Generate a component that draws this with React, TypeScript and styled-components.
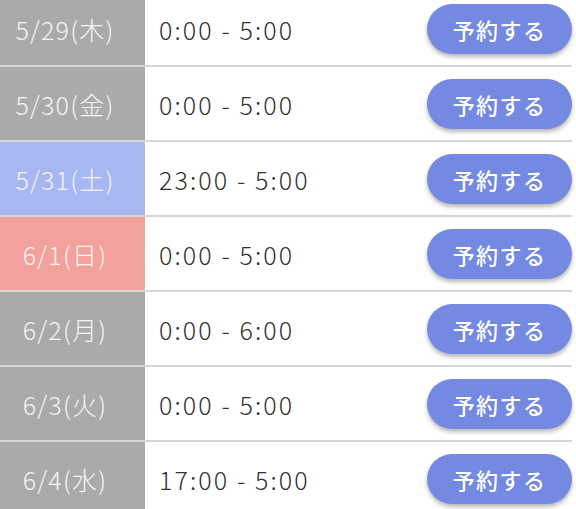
import React from "react";
import styled, { createGlobalStyle } from "styled-components";

const Global = createGlobalStyle`
  html, body { margin: 0; padding: 0; background: #ffffff; overflow: hidden; }
  body { font-family: "Noto Sans CJK JP", "Noto Sans", sans-serif; }
`;

const List = styled.div`
  width: 572px;
  margin-top: -8px;
  display: flex;
  flex-direction: column;
`;

const Row = styled.div`
  display: grid;
  grid-template-columns: 145px 1fr;
  column-gap: 1px;
  height: 73px;
  border-bottom: 2px solid #d6d6d6;
`;

type Kind = "weekday" | "sat" | "sun";

const bg: Record<Kind, string> = {
  weekday: "#aaaaaa",
  sat: "#a7b7f1",
  sun: "#f3a19c",
};

const DateCell = styled.div<{ $kind: Kind }>`
  background: ${(p) => bg[p.$kind]};
  color: #f4f4f4;
  font-size: 25px;
  font-weight: 300;
  display: flex;
  align-items: center;
  justify-content: center;
  letter-spacing: 1.2px;
  padding: 1px 15px 0 0;
`;

const Body = styled.div`
  display: flex;
  align-items: center;
  justify-content: space-between;
  padding-left: 13px;
  background: #ffffff;
`;

const Time = styled.span`
  font-size: 25px;
  font-weight: 300;
  color: #333333;
  letter-spacing: 2.1px;
  padding-top: 1px;
`;

const Button = styled.button`
  width: 145px;
  height: 50px;
  border: none;
  border-radius: 25px;
  background: #7489e1;
  color: #ffffff;
  font-family: "Noto Sans CJK JP", "Noto Sans", sans-serif;
  font-size: 22px;
  font-weight: 500;
  letter-spacing: 1.4px;
  box-shadow: 0 3px 4px rgba(0, 0, 0, 0.28);
  cursor: pointer;
  padding: 0;
`;

const rows: { date: string; time: string; kind: Kind }[] = [
  { date: "5/29(木)", time: "0:00 - 5:00", kind: "weekday" },
  { date: "5/30(金)", time: "0:00 - 5:00", kind: "weekday" },
  { date: "5/31(土)", time: "23:00 - 5:00", kind: "sat" },
  { date: "6/1(日)", time: "0:00 - 5:00", kind: "sun" },
  { date: "6/2(月)", time: "0:00 - 6:00", kind: "weekday" },
  { date: "6/3(火)", time: "0:00 - 5:00", kind: "weekday" },
  { date: "6/4(水)", time: "17:00 - 5:00", kind: "weekday" },
];

export default function App() {
  return (
    <>
      <Global />
      <List>
        {rows.map((r) => (
          <Row key={r.date}>
            <DateCell $kind={r.kind}>{r.date}</DateCell>
            <Body>
              <Time>{r.time}</Time>
              <Button>予約する</Button>
            </Body>
          </Row>
        ))}
      </List>
    </>
  );
}
